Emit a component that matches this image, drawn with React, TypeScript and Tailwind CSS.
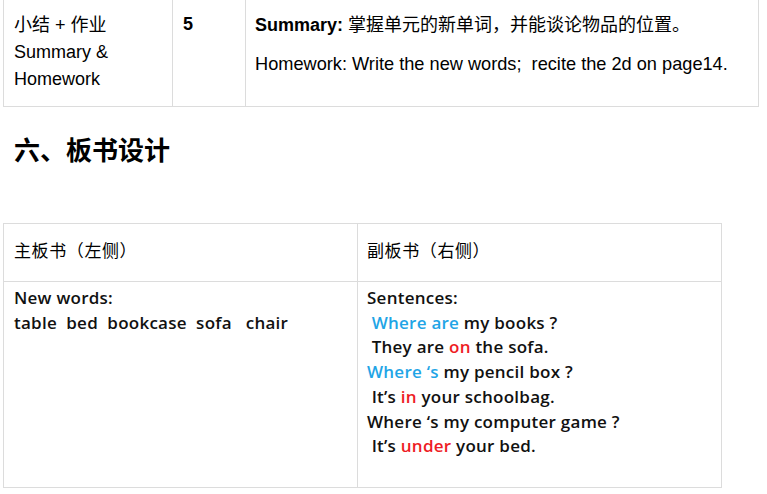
import React from "react";

const cjk = { fontFamily: '"Liberation Sans", "Noto Sans CJK SC", sans-serif' };
const yh = { fontFamily: '"Open Sans", "Noto Sans CJK SC", sans-serif' };

export default function App() {
  return (
    <div className="bg-white w-[767px] h-[494px] overflow-hidden text-black" style={cjk}>
      <div className="ml-[3px] w-[756px] flex border-x border-b border-[#dcdcdc] h-[107px] text-[18px] leading-[27px]">
        <div className="w-[169px] border-r border-[#dcdcdc] pl-[10px] pt-[12px]">
          <div>小结 + 作业</div>
          <div>Summary &amp;</div>
          <div>Homework</div>
        </div>
        <div className="w-[73px] border-r border-[#dcdcdc] pl-[10px] pt-[11px] font-bold">5</div>
        <div className="flex-1 pl-[9px] pt-[12px]">
          <p>
            <span className="font-bold">Summary:</span> 掌握单元的新单词，并能谈论物品的位置。
          </p>
          <p className="mt-[12px] whitespace-pre text-[18.2px]">Homework: Write the new words;  recite the 2d on page14.</p>
        </div>
      </div>

      <h2 className="ml-[14px] mt-[24px] text-[26px] leading-[36px] font-bold" style={{ fontFamily: '"Noto Sans CJK SC", sans-serif' }}>
        六、板书设计
      </h2>

      <div className="ml-[3px] mt-[56px] w-[719px] border border-[#dcdcdc]">
        <div className="flex h-[58px] border-b border-[#dcdcdc] text-[17px] tracking-[0.6px]" style={{ fontFamily: '"Noto Sans CJK SC", sans-serif' }}>
          <div className="w-[354px] border-r border-[#dcdcdc] pl-[10px] pt-[13px]">主板书（左侧）</div>
          <div className="flex-1 pl-[9px] pt-[13px]">副板书（右侧）</div>
        </div>
        <div className="flex h-[205px] text-[17px] leading-[24.7px] font-semibold tracking-[0.25px] whitespace-pre text-[#111]" style={yh}>
          <div className="w-[354px] border-r border-[#dcdcdc] pl-[10px] pt-[4px]">
            <div>New words:</div>
            <div>table  bed  bookcase  sofa   chair</div>
          </div>
          <div className="flex-1 pl-[9px] pt-[4px]">
            <div>Sentences:</div>
            <div> <span className="text-[#1fa5e6]">Where are</span> my books ?</div>
            <div> They are <span className="text-[#ee1c25]">on</span> the sofa.</div>
            <div><span className="text-[#1fa5e6]">Where ‘s</span> my pencil box ?</div>
            <div> It’s <span className="text-[#ee1c25]">in</span> your schoolbag.</div>
            <div>Where ‘s my computer game ?</div>
            <div> It’s <span className="text-[#ee1c25]">under</span> your bed.</div>
          </div>
        </div>
      </div>
    </div>
  );
}
